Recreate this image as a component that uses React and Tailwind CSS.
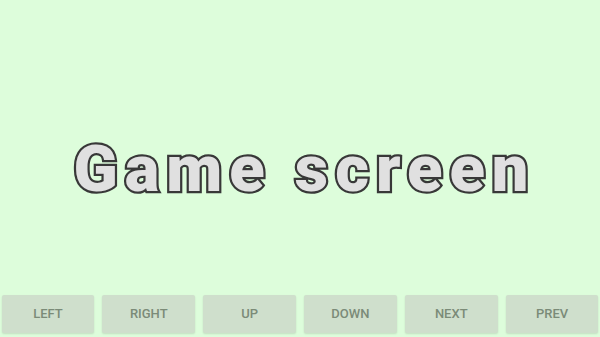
import React from "react";

const buttons = ["LEFT", "RIGHT", "UP", "DOWN", "NEXT", "PREV"];

const App = () => {
  return (
    <div className="flex h-[337px] w-[600px] flex-col bg-[#ddfddb]">
      {/* game area */}
      <div className="flex flex-1 items-center justify-center pl-[9px] pt-[47px]">
        <h1 className="font-['Roboto',Arial,sans-serif] text-[65px] font-black leading-none tracking-[7px] text-[#e0e0e0] [-webkit-text-stroke:4.5px_#383838] [paint-order:stroke_fill]">
          Game screen
        </h1>
      </div>

      {/* controls */}
      <div className="flex h-[46px] items-start gap-[8px] px-[1.5px] pt-[4px]">
        {buttons.map((label) => (
          <button
            key={label}
            className="flex h-[38px] flex-1 items-center justify-center rounded-[2px] bg-[#cfdfcc] font-['Roboto',sans-serif] text-[13px] font-medium text-[#7b8b78] shadow-[0_1px_2px_rgba(0,0,0,0.12)]"
          >
            {label}
          </button>
        ))}
      </div>
    </div>
  );
};

export default App;
